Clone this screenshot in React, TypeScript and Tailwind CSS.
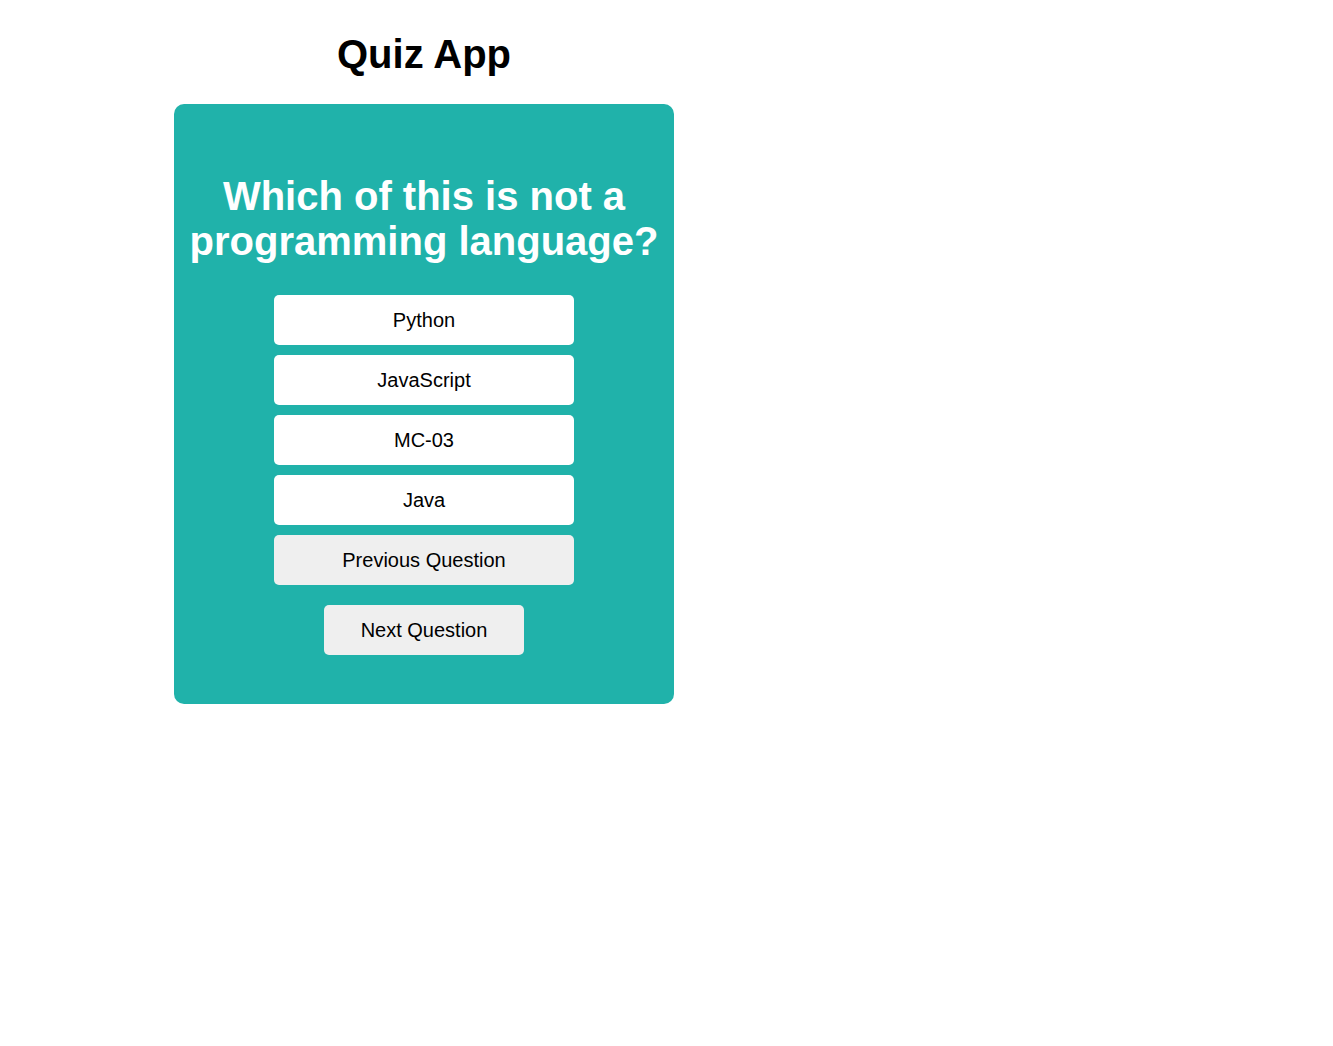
export default function App() {
  const options = ["Python", "JavaScript", "MC-03", "Java"];
  return (
    <div className="min-h-screen bg-white" style={{ fontFamily: '"Liberation Sans", Arial, sans-serif' }}>
      <div className="ml-[174px] w-[500px] pt-[31px]">
        <h1 className="text-center text-[40px] font-bold leading-[46px] text-black">Quiz App</h1>
        <div className="mt-[27px] flex h-[600px] flex-col items-center rounded-[10px] bg-[#20b2aa] px-[8px] pt-[70px]">
          <h2 className="text-center text-[40px] font-bold leading-[45px] text-white">
            Which of this is not a programming language?
          </h2>
          <div className="mt-[31px] flex flex-col gap-[10px]">
            {options.map((o) => (
              <button
                key={o}
                className="h-[50px] w-[300px] rounded-[5px] bg-white text-[20px] text-black"
              >
                {o}
              </button>
            ))}
            <button className="h-[50px] w-[300px] rounded-[5px] bg-[#efefef] text-[20px] text-black">
              Previous Question
            </button>
          </div>
          <button className="mt-[20px] h-[50px] w-[200px] rounded-[5px] bg-[#efefef] text-[20px] text-black">
            Next Question
          </button>
        </div>
      </div>
    </div>
  );
}
